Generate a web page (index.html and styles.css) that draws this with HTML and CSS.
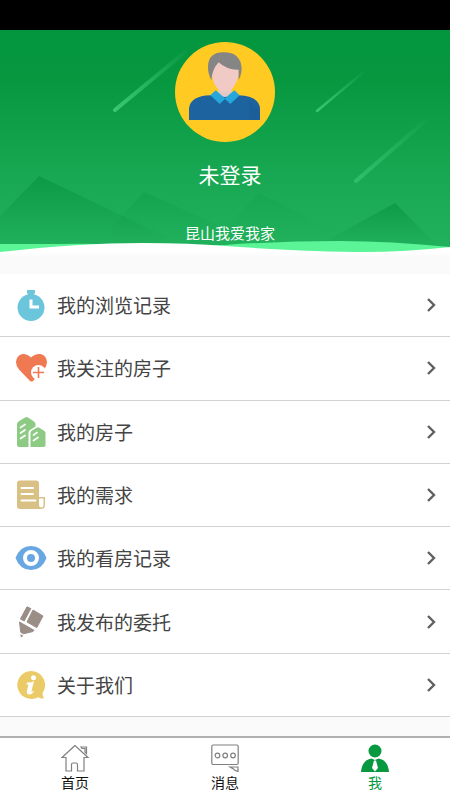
FILE: index.html
```html
<!DOCTYPE html>
<html lang="zh-CN">
<head>
<meta charset="utf-8">
<meta name="viewport" content="width=device-width, initial-scale=1">
<title>我</title>
<link rel="stylesheet" href="styles.css">
</head>
<body>
<div class="status"></div>
<header class="profile">
  <svg class="scene" viewBox="0 0 450 244" preserveAspectRatio="none" aria-hidden="true">
    <defs>
      <linearGradient id="sky" x1="0" y1="0" x2="0" y2="1"><stop offset="0" stop-color="#03963f"/><stop offset=".2" stop-color="#07973f"/><stop offset=".6" stop-color="#18a853"/><stop offset="1" stop-color="#25b560"/></linearGradient>
      <linearGradient id="hill" x1="0" y1="0" x2="0" y2="1"><stop offset="0" stop-color="#079442" stop-opacity=".7"/><stop offset="1" stop-color="#129c4a" stop-opacity="0"/></linearGradient>
      <linearGradient id="trail" x1="0" y1="1" x2="1" y2="0"><stop offset="0" stop-color="#39c774"/><stop offset="1" stop-color="#39c774" stop-opacity="0"/></linearGradient>
      <linearGradient id="foam" x1="0" y1="0" x2="0" y2="1"><stop offset="0" stop-color="#fff"/><stop offset=".3" stop-color="#fff"/><stop offset=".45" stop-color="#fafafa"/><stop offset="1" stop-color="#fafafa"/></linearGradient>
    </defs>
    <path fill="url(#sky)" d="M0 0H450V244H0z"/>
    <path fill="url(#hill)" d="M0 186 39 146 165 206V220H0z"/>
    <path fill="url(#hill)" opacity=".5" d="M102 208 144 162 218 195V212H102z"/>
    <path fill="url(#hill)" opacity=".3" d="M225 198 259 163 345 206V212H225z"/>
    <path fill="url(#hill)" d="M324 212 395 173 438 216V220H324z"/>
    <g fill="none" stroke="url(#trail)" stroke-linecap="round">
      <path stroke-width="4" d="M115 80 190 18"/>
      <path stroke-width="2.5" d="M317 81 366 40"/>
      <path stroke-width="4" opacity=".7" d="M356 151 432 85"/>
    </g>
    <path fill="#5bf497" d="M0 214H60Q110 213 140 217L225 215Q282 211 340 211 390 211 450 217V230H0z"/>
    <path fill="url(#foam)" d="M0 222Q80 213 142 213 190 213 225 216 310 222 365 222 405 222 450 217V244H0z"/>
  </svg>
  <svg class="avatar" viewBox="15 18 300 300" role="img" aria-label="头像">
    <circle cx="165" cy="168" r="150" fill="#ffcb22"/>
    <path fill="#e3c9c5" d="M145 155h40v20l-20 20-20-20z"/>
    <path fill="#f1cac6" d="M128 95 145 75 207 97Q206 124 199 139 185 168 165 169 145 168 132 141 128 130 126 118z"/>
    <path fill="#858585" d="M124 133Q113 112 114 90 116 49 160 49 203 48 213 83 219 106 206 133V101Q170 102 146 79 127 98 124 133z"/>
    <path fill="#1d639f" d="M57 252V217Q61 180 121 178L165 183 207 178Q267 181 270 217V252z"/>
    <path fill="#195993" d="M238 197 270 225V252H238z" opacity=".5"/>
    <path fill="#25a7dc" d="M121 178 137 163 165 187 193 163 209 178 181 204 165 189 149 204z"/>
  </svg>
  <h1 class="name">未登录</h1>
  <p class="company">昆山我爱我家</p>
</header>
<main class="menu">
  <a class="row" href="#history">
    <svg class="icon" viewBox="0 0 32 32" aria-hidden="true"><path fill="#6bc6dc" d="M12.500 1h7q.5 0 .5.500v2.500q0 .5-.5.500H19v1.500h-6V4.500h-.5q-.5 0-.5-.5V1.500q0-.5.500-.5z"/><circle cx="16" cy="18.500" r="13.500" fill="#6bc6dc"/><path fill="none" stroke="#fff" stroke-width="3" d="M16 10.500v7.500h8"/></svg>
    <span class="label">我的浏览记录</span>
    <svg class="arrow" viewBox="0 0 10 16" aria-hidden="true"><path d="M2 2 8 8 2 14"/></svg>
  </a>
  <a class="row" href="#follow">
    <svg class="icon" viewBox="0 0 32 32" aria-hidden="true"><path fill="#ef7950" d="M16 5.500Q12 1.500 7.500 2 1.500 3.500 1 10q0 4 3 7.500L15 29q1.500 1 3 0L29 17.500q3-3.500 3-7.500-.5-6.500-6.500-8Q20 1.500 16 5.500z"/><circle cx="23.500" cy="20.500" r="7.500" fill="#fff"/><path fill="none" stroke="#ef7950" stroke-width="1.600" d="M23.500 15v11M18 20.500h11"/></svg>
    <span class="label">我关注的房子</span>
    <svg class="arrow" viewBox="0 0 10 16" aria-hidden="true"><path d="M2 2 8 8 2 14"/></svg>
  </a>
  <a class="row" href="#houses">
    <svg class="icon" viewBox="0 0 32 32" aria-hidden="true"><path fill="#8dca83" d="M2 8.500q0-2 1.500-3L10 1.500q1.500-1 3 0l6 4q1.500 1 1.500 3v2L15 14q-1.500 1-1.500 3v14H4q-2 0-2-2z"/><path fill="#8dca83" d="M15.500 17q0-1.500 1.200-2.300l5-3q1.300-.7 2.600 0l4.800 3q1.400.8 1.400 2.300V29q0 2-2 2h-13z"/><path stroke="#fff" stroke-width="1.700" stroke-linecap="round" d="m5.500 11.500 4.500-3m-4.500 8.500 4.500-3m-4.500 8.500 4.500-3m8.500-.5 3.500-2.500m-3.500 8 4.500-3"/></svg>
    <span class="label">我的房子</span>
    <svg class="arrow" viewBox="0 0 10 16" aria-hidden="true"><path d="M2 2 8 8 2 14"/></svg>
  </a>
  <a class="row" href="#needs">
    <svg class="icon" viewBox="0 0 32 32" aria-hidden="true"><path fill="#d9c084" d="M5 1.500h16q3 0 3 3V18h6v8q0 4-4 4H5q-3 0-3-3V4.500q0-3 3-3z"/><path fill="#fff" d="M24 19.500h4.500V26q0 2.500-2.200 2.500T24 26z"/><path stroke="#fff" stroke-width="2" stroke-linecap="round" d="M6.500 9H18M6.500 15H18M6.500 21.500h14"/></svg>
    <span class="label">我的需求</span>
    <svg class="arrow" viewBox="0 0 10 16" aria-hidden="true"><path d="M2 2 8 8 2 14"/></svg>
  </a>
  <a class="row" href="#visits">
    <svg class="icon" viewBox="0 0 32 32" aria-hidden="true"><path fill="#68a7e2" d="M.5 16Q5 4 16 4t15.500 12Q27 28 16 28T.5 16z"/><circle cx="16" cy="16" r="6" fill="#68a7e2" stroke="#fff" stroke-width="4"/></svg>
    <span class="label">我的看房记录</span>
    <svg class="arrow" viewBox="0 0 10 16" aria-hidden="true"><path d="M2 2 8 8 2 14"/></svg>
  </a>
  <a class="row" href="#entrust">
    <svg class="icon" viewBox="0 0 32 32" aria-hidden="true"><g fill="#9a8e87" stroke="#9a8e87" stroke-linejoin="round"><path d="M12 .8 15.800 2.600 9.200 15 5.400 13z"/><path d="M18 4 28 10 21.800 21.600 12 16z"/><path d="M4.500 16 19 24.300 18 25.500 8.500 27.800 5.800 26.300z"/><path stroke="none" d="M5.200 28.300 8.500 29.800 6 31.500z"/></g></svg>
    <span class="label">我发布的委托</span>
    <svg class="arrow" viewBox="0 0 10 16" aria-hidden="true"><path d="M2 2 8 8 2 14"/></svg>
  </a>
  <a class="row" href="#about">
    <svg class="icon" viewBox="0 0 32 32" aria-hidden="true"><path fill="#ebca68" d="M16 2A14 14 0 0 1 27.500 24q0 2.500 1.500 5.500-3 .5-6-1.200A14 14 0 1 1 16 2z"/><circle cx="18.500" cy="8.700" r="2.500" fill="#fff"/><path fill="#fff" d="M12 13.500q4 .5 7-1.500l-2.500 10q0 1.500 2.700-.5-2 4.500-5.200 4-3-.5-2-4l1.500-6H11.500z"/></svg>
    <span class="label">关于我们</span>
    <svg class="arrow" viewBox="0 0 10 16" aria-hidden="true"><path d="M2 2 8 8 2 14"/></svg>
  </a>
</main>
<nav class="tabs">
  <a class="tab" href="#home">
    <svg class="tab-icon" viewBox="0 0 28 28" aria-hidden="true"><path d="M14 1.500 1 13.500h4V27h5.500v-6.500q0-1.500 1.500-1.500h3q1.500 0 1.500 1.500V27H23V13.500h4zM20 3h5.500v6.500L24 8V4.500h-3z"/></svg>
    <span>首页</span>
  </a>
  <a class="tab" href="#messages">
    <svg class="tab-icon" viewBox="0 0 28 28" aria-hidden="true"><rect x=".8" y="1" width="26.400" height="19.500" rx="1.500"/><circle cx="6.500" cy="11.500" r="2.300"/><circle cx="14.200" cy="11.500" r="2.300"/><circle cx="22" cy="11.500" r="2.300"/><path d="M19 23h8v4.300q-3.500-.5-4.500-2.300L19 23z"/></svg>
    <span>消息</span>
  </a>
  <a class="tab active" href="#me" aria-current="page">
    <svg class="tab-icon" viewBox="0 0 28 28" aria-hidden="true"><circle cx="14" cy="7" r="6.500"/><path fill-rule="evenodd" d="M0 28Q1 16 10.500 14.500L14 16l3.500-1.500Q27 16 28 28zM13 16.500l-2 7.500 3 3.500 3-3.500-2-7.500z"/></svg>
    <span>我</span>
  </a>
</nav>
</body>
</html>
```

FILE: styles.css
```css
* {
  box-sizing: border-box;
}

body {
  display: flex;
  flex-direction: column;
  min-height: 100vh;
  margin: 0;
  background: #fafafa;
  color: #444;
  font-family: "Noto Sans CJK SC", sans-serif;
}

a {
  color: inherit;
  text-decoration: none;
}

.status {
  height: 30px;
  background: #000;
}

.profile {
  position: relative;
  display: flex;
  flex-direction: column;
  align-items: center;
  padding: 12px 0 29px;
  color: #fff;
}

.scene {
  position: absolute;
  inset: 0;
  width: 100%;
  height: 100%;
}

.avatar {
  position: relative;
  width: 100px;
  height: 100px;
}

.name,
.company {
  position: relative;
  padding-left: 10px;
  font-weight: 400;
}

.name {
  margin: 17px 0 0;
  font-size: 21px;
  line-height: 30px;
}

.company {
  margin: 32px 0 0;
  font-size: 15px;
  line-height: 24px;
}

.menu {
  display: flex;
  flex: 1;
  flex-direction: column;
  margin-bottom: 19px;
  background: #fff;
}

.row {
  display: flex;
  flex: 1;
  align-items: center;
  gap: 10px;
  min-height: 48px;
  padding: 0 14px 0 15px;
  border-bottom: 1px solid #d2d2d2;
}

.icon {
  width: 32px;
  height: 32px;
}

.label {
  flex: 1;
  font-size: 19px;
  line-height: 28px;
}

.arrow {
  width: 10px;
  height: 16px;
  fill: none;
  stroke: #606060;
  stroke-width: 2.4;
}

.tabs {
  position: sticky;
  bottom: 0;
  display: flex;
  border-top: 2px solid #b0b0b0;
  background: #fff;
}

.tab {
  display: flex;
  flex: 1;
  flex-direction: column;
  align-items: center;
  padding: 6px 0 8px;
  color: #111;
  font-size: 14px;
  line-height: 20px;
}

.tab-icon {
  width: 28px;
  height: 28px;
  fill: none;
  stroke: #808080;
  stroke-width: 1.2;
}

.active {
  color: #079840;
}

.active .tab-icon {
  fill: #079840;
  stroke: none;
}
```
